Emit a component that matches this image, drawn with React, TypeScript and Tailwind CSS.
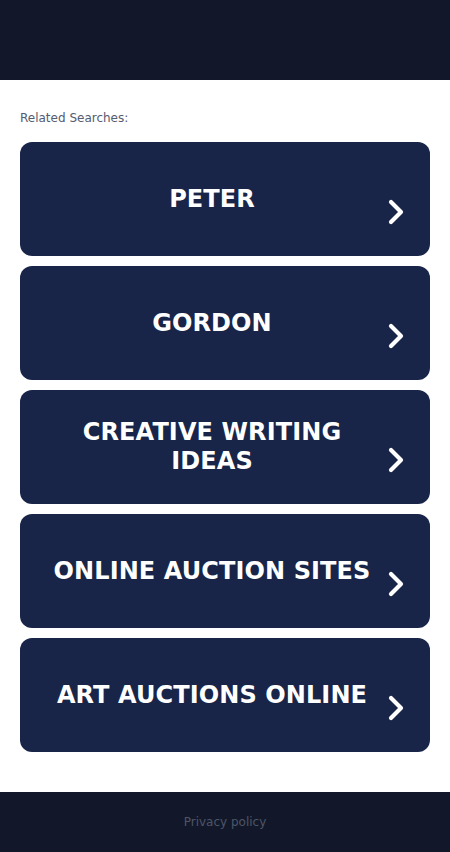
import { Fragment } from "react";

const searches = [
  "PETER",
  "GORDON",
  "CREATIVE WRITING IDEAS",
  "ONLINE AUCTION SITES",
  "ART AUCTIONS ONLINE",
];

function Chevron() {
  return (
    <svg viewBox="0 0 16 26" className="h-[26px] w-[16px] shrink-0" fill="none">
      <polyline
        points="3,3 13,13 3,23"
        stroke="white"
        strokeWidth="4.2"
        strokeLinecap="round"
        strokeLinejoin="round"
      />
    </svg>
  );
}

export default function App() {
  return (
    <div className="flex min-h-[852px] w-full flex-col bg-white font-['DejaVu_Sans',sans-serif]">
      <header className="h-[80px] bg-[#121829]" />

      <main className="flex-1 px-5 pt-[30px] pb-10">
        <p className="mb-[16px] text-[12px] leading-[16px] text-[#555b70]">Related Searches:</p>
        <div className="flex flex-col gap-[10px]">
          {searches.map((s) => (
            <Fragment key={s}>
              <a
                href="#"
                className="flex h-[114px] items-center rounded-[12px] bg-[#182548] pl-5 pr-[26px]"
              >
                <span className="flex-1 pl-[10px] pr-[14px] text-center text-[24px] leading-[29px] font-bold tracking-[0.1px] text-white">
                  {s}
                </span>
                <span className="mt-[26px]">
                  <Chevron />
                </span>
              </a>
            </Fragment>
          ))}
        </div>
      </main>

      <footer className="flex h-[60px] items-center justify-center bg-[#121829]">
        <a href="#" className="text-[12px] text-[#4d5568]">Privacy policy</a>
      </footer>
    </div>
  );
}
